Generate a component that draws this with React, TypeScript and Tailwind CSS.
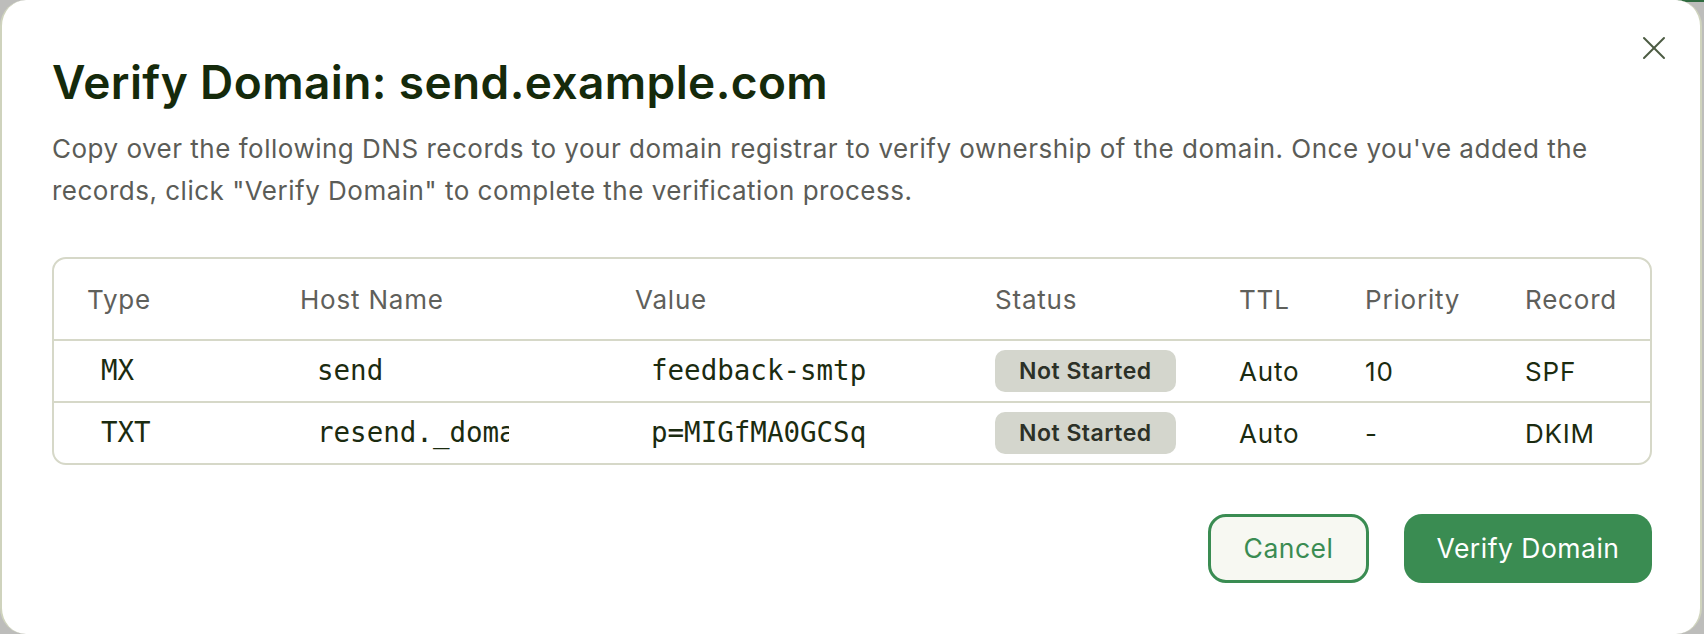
import { X } from 'lucide-react'

type DnsRecord = {
  type: string
  host: string
  value: string
  status: string
  ttl: string
  priority: string
  record: string
}

const records: DnsRecord[] = [
  {
    type: 'MX',
    host: 'send',
    value: 'feedback-smtp.us-east-1.amazonses.com',
    status: 'Not Started',
    ttl: 'Auto',
    priority: '10',
    record: 'SPF',
  },
  {
    type: 'TXT',
    host: 'resend._domainkey',
    value: 'p=MIGfMA0GCSqGSIb3DQEBAQUAA4GNADCBiQKBgQC',
    status: 'Not Started',
    ttl: 'Auto',
    priority: '-',
    record: 'DKIM',
  },
]

const cols = 'grid grid-cols-[213px_335px_360px_244px_126px_160px_1fr] items-center pl-[33px]'
const mono = 'block overflow-hidden whitespace-nowrap font-["DejaVu_Sans_Mono",monospace] text-[27.5px] tracking-normal text-[#1b2b10]'

export default function App() {
  return (
    <div className="relative h-[634px] w-full bg-[#bdbdbb] font-['Inter',sans-serif]">
      <div className="absolute right-0 top-0 h-[2px] w-[26px] bg-[#2f6b40]" />
      <div className="relative h-[634px] w-[1702px] rounded-[26px] border-x-2 border-[#cfd3bd] bg-white pl-[50px] pr-[48px] pt-[55px]">
        <button className="absolute right-[26px] top-[28px] text-[#4b5b42]">
          <X className="h-[40px] w-[40px]" strokeWidth={1.2} />
        </button>

        <h2 className="text-[46px] font-semibold leading-[54px] tracking-[0.4px] text-[#152a0b]">
          Verify Domain: send.example.com
        </h2>
        <p className="mt-[19px] text-[26px] leading-[42px] tracking-[0.5px] text-[#5b5c57]">
          Copy over the following DNS records to your domain registrar to verify ownership of the domain. Once
          you've added the records, click "Verify Domain" to complete the verification process.
        </p>

        <div className="mt-[45px] rounded-[14px] border-2 border-[#d6d8c8]">
          <div className={`${cols} h-[80px] text-[26px] tracking-[0.8px] text-[#5f605b]`}>
            <span>Type</span>
            <span>Host Name</span>
            <span>Value</span>
            <span>Status</span>
            <span>TTL</span>
            <span>Priority</span>
            <span>Record</span>
          </div>
          {records.map((r) => (
            <div
              key={r.type}
              className={`${cols} h-[62px] border-t-2 border-[#d6d8c8] text-[26px] tracking-[0.8px] text-[#1b2b10]`}
            >
              <span className={`${mono} pl-[14px]`}>{r.type}</span>
              <span className={`${mono} w-[209px] pl-[17px]`}>{r.host}</span>
              <span className={`${mono} w-[232px] pl-[16px]`}>{r.value}</span>
              <span>
                <span className="inline-flex h-[42px] items-center rounded-[10px] bg-[#d4d6cd] px-[24px] text-[23px] font-semibold tracking-[0.5px] text-[#2c3127]">
                  {r.status}
                </span>
              </span>
              <span>{r.ttl}</span>
              <span>{r.priority}</span>
              <span>{r.record}</span>
            </div>
          ))}
        </div>

        <div className="mt-[49px] flex justify-end gap-[35px]">
          <button className="h-[69px] w-[161px] rounded-[18px] border-[3px] border-[#3a8c52] bg-[#f7f8f2] text-[26.5px] tracking-[0.5px] text-[#3a8c52]">
            Cancel
          </button>
          <button className="h-[69px] w-[248px] rounded-[18px] bg-[#3a8c52] text-[26.5px] tracking-[0.5px] text-white">
            Verify Domain
          </button>
        </div>
      </div>
    </div>
  )
}
